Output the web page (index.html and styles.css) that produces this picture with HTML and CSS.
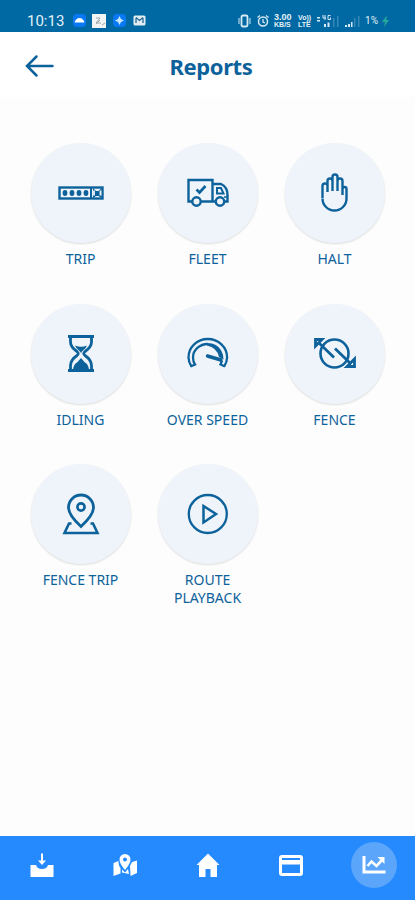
FILE: index.html
```html
<!DOCTYPE html>
<html lang="en">

<head>
  <meta charset="UTF-8">
  <meta name="viewport" content="width=device-width, initial-scale=1.0">
  <title>Reports</title>
  <link rel="stylesheet" href="styles.css">
</head>

<body>
  <div class="status-bar">
    <span class="clock">10:13</span>
    <svg class="status-left" width="74" height="16" viewBox="0 0 74 16">
      <rect x="0" y="1" width="13" height="13" rx="4" fill="#0878f4" />
      <path d="M1.5 9.5Q3 5 6.500 5Q10 5 11.500 9.500Z" fill="#fff" />
      <rect x="19" y="1" width="14" height="14" fill="#f2f5f3" />
      <path d="M23 5h4l-4 5h5M27 7l-4 4M29 12l3-2" stroke="#9cabae" fill="none" />
      <rect x="40" y="1" width="13" height="13" rx="4" fill="#0878f4" />
      <path d="M46.500 3l1.500 3 3 1.500-3 1.500-1.500 3-1.500-3-3-1.500 3-1.500z" fill="#c5e7ff" />
      <rect x="60.500" y="2.500" width="12" height="10" rx="1.500" fill="#e1edf2" />
      <path d="M63 4.500l3.500 3 3.500-3M63 5v5M70 5v5" fill="none" stroke="#236b96" stroke-width="1.300" />
    </svg>
    <div class="status-right">
      <svg width="32" height="14" viewBox="0 0 32 14" fill="none" stroke="#d8eaf4">
        <rect x="3.500" y="1.500" width="6" height="11" rx="1.500" stroke-width="1.800" />
        <path d="M1 4v6M12 4v6" />
        <circle cx="25" cy="7.500" r="4.500" stroke-width="1.500" />
        <path d="M25 5v3l2 1M19.500 3.500l2.500-2M30.500 3.500l-2.500-2" stroke-width="1.300" />
      </svg>
      <span class="tiny net-speed"><b>3.00</b><b>KB/S</b></span>
      <span class="tiny volte"><b>Vo))</b><b>LTE</b></span>
      <svg width="44" height="14" viewBox="0 0 44 14" fill="#d8eaf4">
        <path d="M0 3h3v1.500H0zM0 6h3v1.500H0zM7 10h2v3H7zM10.500 8.500h2V13h-2z" />
        <path d="M6 1v3h3M8 1v5M13.500 1.500H11v4h2.500v-2" fill="none" stroke="#d8eaf4" />
        <path d="M16 4h1.500v9H16zM20 2h1.500v11H20zM37 4h1.500v9H37zM41 2h1.500v11H41z" opacity=".25" />
        <path d="M28 11h2v2h-2zM31 10h2v3h-2zM34 8h1.500v5H34z" />
      </svg>
      <span class="battery">1%</span>
      <svg width="8" height="12" viewBox="0 0 8 12"><path d="M5 0L0 7h3l-1 5 5-7H4z" fill="#25a99b" /></svg>
    </div>
  </div>

  <header class="header">
    <svg class="back" width="30" height="24" viewBox="0 0 30 24">
      <path d="M11.500 2.500L2 12l9.500 9.500M2.500 12H27.500" />
    </svg>
    <h1 class="title">Reports</h1>
  </header>

  <main class="reports">
    <a class="report">
      <span class="disc">
        <svg class="icon" viewBox="0 0 48 48">
          <rect x="2.500" y="18.500" width="43" height="11" stroke-width="2.400" />
          <path d="M34 18v12" stroke-width="2" />
          <g class="solid">
            <ellipse cx="8" cy="24" rx="2.400" ry="3" />
            <ellipse cx="15" cy="24" rx="2.400" ry="3" />
            <ellipse cx="22" cy="24" rx="2.400" ry="3" />
            <ellipse cx="29" cy="24" rx="2.400" ry="3" />
            <path d="M36 19l3 3h2.500l3-3v10l-3-2H39l-3 2z" />
          </g>
          <path d="M37 21.500v5M43.500 21.500v5" stroke="#eff4fa" stroke-width="1.800" />
        </svg>
      </span>
      <span class="label">TRIP</span>
    </a>
    <a class="report">
      <span class="disc">
        <svg class="icon" viewBox="0 0 48 48">
          <path d="M8 32.500H4.500V11h24v21.500M28.500 15H37q6.500 3 6.500 11v6.500h-3M17 32.500h14.500" />
          <circle cx="12.500" cy="32.500" r="4.200" />
          <circle cx="36" cy="32.500" r="4.200" />
          <path d="M12.500 20.500l3 3 6-6.500" stroke-width="2.600" />
          <path d="M33 19h4l2.500 5.500H33z" stroke-width="2" />
          <path d="M40 28h3" stroke-width="1.500" />
        </svg>
      </span>
      <span class="label">FLEET</span>
    </a>
    <a class="report">
      <span class="disc">
        <svg class="icon" viewBox="0 0 48 48">
          <path d="M11.500 29V17q0-2.500 2.500-2.500t2.500 2.500v6M16.500 22V12q0-2.500 2.500-2.500t2.500 2.500v10M21.500 21V8q0-2.500 2.500-2.500t2.500 2.500v13M26.500 22V12q0-2.500 2.500-2.500t2.500 2.500v14M31.500 23v-3q0-2 2-2t2 2v9.500a12 12 0 0 1-24 0" />
        </svg>
      </span>
      <span class="label">HALT</span>
    </a>
    <a class="report">
      <span class="disc">
        <svg class="icon" viewBox="0 0 48 48">
          <path d="M11 6.500h26M11 40.500h26" stroke-width="3" />
          <path d="M13.500 7v5q0 5 6.500 9.500 2.500 2 0 4-6.500 4.500-6.500 10V40M34.500 7v5q0 5-6.500 9.500-2.500 2 0 4 6.500 4.500 6.500 10V40" stroke-width="2.800" />
          <path class="solid" d="M18 15.500q6 2.500 12 0-1 3-4 5-2 1.500-2 3 0-1.500-2-3-3-2-4-5zM24 28q3 4 6 6 1.500 2 2 6H16q.5-4 2-6 3-2 6-6z" />
        </svg>
      </span>
      <span class="label">IDLING</span>
    </a>
    <a class="report">
      <span class="disc">
        <svg class="icon" viewBox="0 0 48 48">
          <path d="M7.500 36.500Q4.500 32 4.500 27.500a19.300 18.500 0 0 1 38.600 0q0 4.500-3 9" stroke-width="2.300" />
          <path d="M6.500 36.500l4.500-2q-2-3-2-7A14.800 13.500 0 0 1 23.800 14" stroke-width="2.300" />
          <path class="solid" d="M23 12.900q12.500 0 16 12l.5 4.600-4.500-2.500Q33 17.500 23 15.500z" />
          <path d="M23.500 26L37 30" stroke-width="3.400" stroke-linecap="round" />
          <path d="M38 30.500l-1.500 4 4.500 2" stroke-width="2.300" />
        </svg>
      </span>
      <span class="label">OVER SPEED</span>
    </a>
    <a class="report">
      <span class="disc">
        <svg class="icon" viewBox="0 0 48 48">
          <circle cx="23.500" cy="23.500" r="14" stroke-width="2.600" />
          <path d="M8 13l15 14.500M24 18.500L40 34" stroke-width="2.800" />
          <path d="M4.500 16V9.500H11L7.500 13zM43.500 29v7.500H36l4-4z" stroke-width="2.800" />
        </svg>
      </span>
      <span class="label">FENCE</span>
    </a>
    <a class="report">
      <span class="disc">
        <svg class="icon" viewBox="0 0 48 48">
          <path d="M24 36.500Q11.500 25 11.500 17.500a12.500 12.500 0 0 1 25 0Q36.500 25 24 36.500z" stroke-width="2.800" />
          <circle cx="24" cy="17" r="3.600" stroke-width="2.600" />
          <path d="M14.500 33.500H12L7.500 43h33L36 33.500h-2.500" stroke-width="2.600" />
        </svg>
      </span>
      <span class="label">FENCE TRIP</span>
    </a>
    <a class="report">
      <span class="disc">
        <svg class="icon" viewBox="0 0 48 48">
          <circle cx="23.800" cy="24" r="19" stroke-width="2.300" />
          <path d="M19.500 16v16.500L32 24z" stroke-width="2.500" />
        </svg>
      </span>
      <span class="label">ROUTE<br>PLAYBACK</span>
    </a>
  </main>

  <nav class="tab-bar">
    <a class="tab">
      <svg viewBox="0 0 28 28">
        <path d="M2.500 14H8q1 4 6 4t6-4h5.500v12h-23z" />
        <path d="M13 2.500h2v7h3L14 14l-4-4.500h3z" />
      </svg>
    </a>
    <a class="tab">
      <svg viewBox="0 0 28 28">
        <path d="M2.500 12l5-2q0 5 2 7v5.500l-7 2.500zM11 18.500l3 3 3-3.500 1 5-7-1.500zM19 15l2-4 5-1.500V22l-6.500 3z" />
        <path fill-rule="evenodd" d="M14 3a5.500 5.500 0 0 1 5.500 5.500q0 4-5.500 10.500-5.500-6.500-5.500-10.500A5.500 5.500 0 0 1 14 3zm0 3.500a2 2 0 1 0 0 4 2 2 0 0 0 0-4z" />
      </svg>
    </a>
    <a class="tab">
      <svg viewBox="0 0 28 28"><path d="M14 2.500L25.500 14H23v12h-6.500v-8h-5v8H5V14H2.500z" /></svg>
    </a>
    <a class="tab">
      <svg viewBox="0 0 28 28"><path fill-rule="evenodd" d="M5 4h18q3 0 3 3v15q0 3-3 3H5q-3 0-3-3V7q0-3 3-3zm0 3v2h18V7zm0 6.500V22h18v-8.500z" /></svg>
    </a>
    <a class="tab">
      <span class="active">
        <svg viewBox="0 0 28 28">
          <path d="M2.500 5h3v14.500h20v3h-23z" />
          <path d="M7.500 15l4-4.500 5 4.500 6-6.500" fill="none" stroke="#fff" stroke-width="2.600" />
          <path d="M17.500 6h7v7z" />
        </svg>
      </span>
    </a>
  </nav>
</body>

</html>
```
FILE: styles.css
```css
body {
  margin: 0;
  height: 900px;
  display: flex;
  flex-direction: column;
  overflow: hidden;
  background: #fdfdfd;
  font-family: "Noto Sans", "Open Sans", sans-serif;
  color: #0d629b;
}

.status-bar {
  box-sizing: border-box;
  height: 32px;
  padding: 10px 25px 0 27px;
  display: flex;
  align-items: center;
  background: #0069a3;
  color: #e3f0f7;
}
.clock {
  width: 46px;
  font: 15px/22px Roboto, sans-serif;
  white-space: nowrap;
}
.status-left {
  flex: none;
}
.status-right {
  margin-left: auto;
  display: flex;
  align-items: center;
  gap: 4px;
}
.tiny {
  display: flex;
  flex-direction: column;
  font: 7px/7px "Liberation Sans", sans-serif;
}
.tiny b {
  white-space: nowrap;
}
.net-speed {
  width: 20px;
}
.net-speed b:first-child {
  font-size: 9px;
}
.volte {
  width: 15px;
}
.battery {
  font: 10px/14px Roboto, sans-serif;
}

.header {
  flex: none;
  box-sizing: border-box;
  height: 65px;
  padding: 0 25px;
  display: grid;
  grid-template-columns: 30px 1fr 30px;
  align-items: center;
  background: #fff;
}
.back {
  margin-top: 2px;
  fill: none;
  stroke: #0d629b;
  stroke-width: 2.500;
  stroke-linecap: round;
}
.title {
  margin: 0 0 0 7px;
  padding-top: 2px;
  text-align: center;
  font-size: 22px;
  line-height: 30px;
  font-weight: 700;
  letter-spacing: -.4px;
}

.reports {
  flex: 1;
  padding: 46px 16px 0 17px;
  display: grid;
  grid-template-columns: repeat(3, 127px);
  grid-auto-rows: 160.500px;
  align-content: start;
}
.report {
  display: flex;
  flex-direction: column;
  align-items: center;
}
.disc {
  flex: none;
  width: 100px;
  height: 100px;
  display: flex;
  align-items: center;
  justify-content: center;
  border-radius: 50%;
  background: #eff4fa;
  box-shadow: 0 1px 2px rgba(0, 0, 0, .13);
}
.icon {
  width: 48px;
  height: 48px;
  fill: none;
  stroke: #0d629b;
  stroke-width: 2.400;
}
.icon .solid {
  fill: #0d629b;
  stroke: none;
}
.label {
  margin-top: 7px;
  text-align: center;
  font-size: 14px;
  line-height: 18px;
  white-space: nowrap;
}

.tab-bar {
  flex: none;
  height: 64px;
  display: grid;
  grid-template-columns: repeat(5, 1fr);
  background: #268aff;
}
.tab {
  padding-top: 6px;
  height: 46px;
  display: flex;
  align-items: center;
  justify-content: center;
}
.tab svg {
  width: 28px;
  height: 28px;
  fill: #fff;
}
.active {
  width: 46px;
  height: 46px;
  display: flex;
  align-items: center;
  justify-content: center;
  border-radius: 50%;
  background: #5ba5fa;
}
```
